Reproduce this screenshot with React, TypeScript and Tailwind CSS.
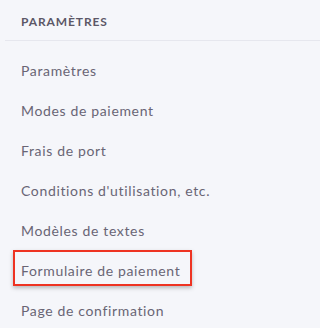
import React from "react";

const items = [
  "Paramètres",
  "Modes de paiement",
  "Frais de port",
  "Conditions d'utilisation, etc.",
  "Modèles de textes",
  "Formulaire de paiement",
  "Page de confirmation",
];

export default function App() {
  return (
    <div
      className="w-full min-w-[219px] h-[328px] overflow-hidden bg-[#f5f6fa]"
      style={{ fontFamily: "Lato, 'Open Sans', sans-serif" }}
    >
      <div className="h-[40px] flex items-center pl-[21px] pt-[4px] text-[12px] font-bold tracking-[0.9px] text-[#5c5867]">
        PARAMÈTRES
      </div>
      <div className="ml-[5px] h-px bg-[#e6e7ee]" />
      <div className="pt-[9px] flex flex-col">
        {items.map((t, i) => (
          <div
            key={t}
            className="relative h-[40px] flex items-center pl-[21px] text-[14px] tracking-[0.65px] text-[#696575]"
          >
            {i === 5 && (
              <span className="absolute left-[13px] top-[0px] w-[179px] h-[36px] border-2 border-[#ee3322] shadow-[0_2px_4px_rgba(0,0,0,0.25)]" />
            )}
            <span className="relative">{t}</span>
          </div>
        ))}
      </div>
    </div>
  );
}
